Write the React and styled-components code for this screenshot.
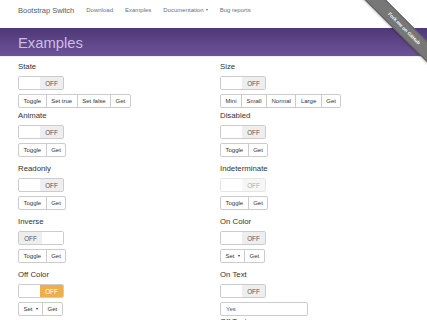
import React from 'react';
import styled, { createGlobalStyle } from 'styled-components';

const GlobalStyle = createGlobalStyle`
  body {
    margin: 0;
    background: #fff;
    color: #333;
    font-family: "Liberation Sans", Arial, sans-serif;
    overflow: hidden;
  }
`;

const Page = styled.div`
  position: relative;
  width: 427px;
  height: 320px;
  overflow: hidden;
`;

const Navbar = styled.nav`
  height: 28px;
  box-sizing: border-box;
  display: flex;
  align-items: center;
  padding: 0 18px 8px;
  background: #fff;
`;

const Brand = styled.span`
  font-size: 7.5px;
  color: #505c6b;
  margin-right: 6px;
`;

const NavLink = styled.span`
  display: flex;
  align-items: center;
  gap: 2px;
  font-size: 6px;
  color: #66717f;
  padding: 0 6px;
`;

const Caret = styled.span`
  display: inline-block;
  width: 0;
  height: 0;
  border-left: 1.5px solid transparent;
  border-right: 1.5px solid transparent;
  border-top: 2px solid ${(p) => p.color || '#66717f'};
`;

const Banner = styled.header`
  height: 29px;
  box-sizing: border-box;
  display: flex;
  align-items: center;
  padding: 2px 18px 0;
  background: linear-gradient(to bottom, #4f3877 0%, #6c5398 100%);
  border-bottom: 1px solid #f0eef4;
`;

const Title = styled.h1`
  margin: 0;
  font-size: 14.8px;
  font-weight: normal;
  color: #cdbfe3;
`;

const Ribbon = styled.div`
  position: absolute;
  left: 344px;
  top: 21px;
  width: 120px;
  height: 13px;
  background: #777;
  border-top: 1px solid #5f5f5f;
  border-bottom: 1px solid #5f5f5f;
  transform: rotate(45deg);
  display: flex;
  align-items: center;
  justify-content: center;
  font-size: 4.8px;
  font-weight: bold;
  color: #fff;
  z-index: 2;
  box-shadow: 0 1px 2px rgba(0, 0, 0, 0.3);
`;

const Content = styled.main`
  display: grid;
  grid-template-columns: 202px 1fr;
  padding: 5px 18px 0;
`;

const Column = styled.div`
  display: flex;
  flex-direction: column;
`;

const Section = styled.section`
  display: flex;
  flex-direction: column;
  align-items: flex-start;
  gap: 4px;
  margin-bottom: ${(p) => p.gap ?? 7}px;
`;

const Label = styled.h3`
  margin: 0;
  font-size: 7.8px;
  line-height: 10px;
  font-weight: normal;
  color: #333;
`;

const Switch = styled.div`
  display: flex;
  flex-direction: ${(p) => (p.inverse ? 'row-reverse' : 'row')};
  width: 46px;
  height: 14px;
  box-sizing: border-box;
  border: 1px solid #ccc;
  border-radius: 2px;
  overflow: hidden;
  opacity: ${(p) => (p.faded ? 0.5 : 1)};
`;

const SwitchBlank = styled.span`
  flex: 1;
  background: #fff;
`;

const SwitchHandle = styled.span`
  width: 23px;
  display: flex;
  align-items: center;
  justify-content: center;
  font-size: 6.3px;
  color: ${(p) => (p.color ? '#fff' : '#555')};
  background: ${(p) => p.color || '#eee'};
`;

const ButtonGroup = styled.div`
  display: flex;
`;

const Button = styled.span`
  height: 14px;
  box-sizing: border-box;
  display: flex;
  align-items: center;
  gap: 3px;
  padding: 0 4.5px;
  font-size: 6px;
  color: #333;
  background: #fff;
  border: 1px solid #ccc;
  margin-left: -1px;

  &:first-child {
    margin-left: 0;
    border-radius: 2px 0 0 2px;
  }
  &:last-child {
    border-radius: 0 2px 2px 0;
  }
`;

const TextInput = styled.div`
  width: 88px;
  height: 14px;
  box-sizing: border-box;
  display: flex;
  align-items: center;
  padding: 0 5px;
  font-size: 6px;
  color: #555;
  border: 1px solid #ccc;
  border-radius: 2px;
`;

const Off = ({ inverse, color, faded }) => (
  <Switch inverse={inverse} faded={faded}>
    <SwitchBlank />
    <SwitchHandle color={color}>OFF</SwitchHandle>
  </Switch>
);

const Buttons = ({ items }) => (
  <ButtonGroup>
    {items.map((b) => (
      <Button key={b}>
        {b === 'Set' ? (
          <>
            Set <Caret color="#333" />
          </>
        ) : (
          b
        )}
      </Button>
    ))}
  </ButtonGroup>
);

const App = () => (
  <Page>
    <GlobalStyle />
    <Navbar>
      <Brand>Bootstrap Switch</Brand>
      <NavLink>Download</NavLink>
      <NavLink>Examples</NavLink>
      <NavLink>
        Documentation <Caret />
      </NavLink>
      <NavLink>Bug reports</NavLink>
    </Navbar>
    <Banner>
      <Title>Examples</Title>
    </Banner>
    <Ribbon>Fork me on GitHub</Ribbon>
    <Content>
      <Column>
        <Section gap={3}>
          <Label>State</Label>
          <Off />
          <Buttons items={['Toggle', 'Set true', 'Set false', 'Get']} />
        </Section>
        <Section>
          <Label>Animate</Label>
          <Off />
          <Buttons items={['Toggle', 'Get']} />
        </Section>
        <Section>
          <Label>Readonly</Label>
          <Off />
          <Buttons items={['Toggle', 'Get']} />
        </Section>
        <Section>
          <Label>Inverse</Label>
          <Off inverse />
          <Buttons items={['Toggle', 'Get']} />
        </Section>
        <Section>
          <Label>Off Color</Label>
          <Off color="#f0ad4e" />
          <Buttons items={['Set', 'Get']} />
        </Section>
      </Column>
      <Column>
        <Section gap={3}>
          <Label>Size</Label>
          <Off />
          <Buttons items={['Mini', 'Small', 'Normal', 'Large', 'Get']} />
        </Section>
        <Section>
          <Label>Disabled</Label>
          <Off />
          <Buttons items={['Toggle', 'Get']} />
        </Section>
        <Section>
          <Label>Indeterminate</Label>
          <Off faded />
          <Buttons items={['Toggle', 'Get']} />
        </Section>
        <Section>
          <Label>On Color</Label>
          <Off />
          <Buttons items={['Set', 'Get']} />
        </Section>
        <Section gap={1}>
          <Label>On Text</Label>
          <Off />
          <TextInput>Yes</TextInput>
        </Section>
        <Section>
          <Label>Off Text</Label>
        </Section>
      </Column>
    </Content>
  </Page>
);

export default App;
